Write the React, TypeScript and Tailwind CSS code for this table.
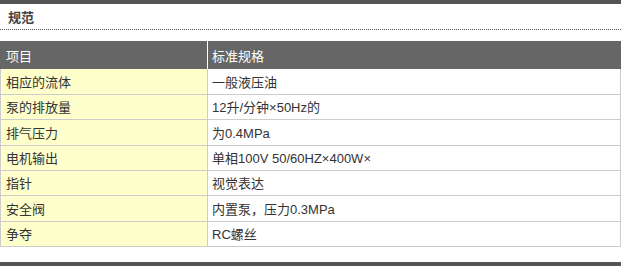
import React from "react";

const rows: { k: string; v: string; h: string }[] = [
  { k: "相应的流体", v: "一般液压油", h: "h-[26px]" },
  { k: "泵的排放量", v: "12升/分钟×50Hz的", h: "h-[25px]" },
  { k: "排气压力", v: "为0.4MPa", h: "h-[26px]" },
  { k: "电机输出", v: "单相100V 50/60HZ×400W×", h: "h-[25px]" },
  { k: "指针", v: "视觉表达", h: "h-[25px]" },
  { k: "安全阀", v: "内置泵，压力0.3MPa", h: "h-[26px]" },
  { k: "争夺", v: "RC螺丝", h: "h-[25px]" },
];

export default function App() {
  return (
    <div
      className="w-[621px] h-[266px] bg-white flex flex-col text-[13px] text-[#333]"
      style={{ fontFamily: '"Liberation Sans", "Noto Sans CJK SC", sans-serif' }}
    >
      <div className="h-[4px] bg-[#555555] shrink-0" />
      <div className="h-[25px] shrink-0 pl-[8px] pt-[5px] font-bold text-[13px] leading-[17px] text-[#444]">
        规范
      </div>
      <div className="h-[1px] shrink-0 border-b border-dotted border-[#555]" />
      <div className="h-[11px] shrink-0" />
      <div className="grid grid-cols-[208px_1fr] h-[28px] shrink-0 bg-[#666666] text-white">
        <div className="border-r border-white flex items-center pl-[6px] pt-[3px]">项目</div>
        <div className="flex items-center pl-[4px] pt-[3px]">标准规格</div>
      </div>
      <div className="border-l border-r border-[#cccccc] shrink-0">
        {rows.map((r) => (
          <div
            key={r.k}
            className={`grid grid-cols-[207px_1fr] border-b border-[#cccccc] ${r.h}`}
          >
            <div className="bg-[#ffffcc] border-r border-[#cccccc] flex items-center pl-[5px] pt-[2px]">
              {r.k}
            </div>
            <div className="flex items-center pl-[4px] pt-[2px]">{r.v}</div>
          </div>
        ))}
      </div>
      <div className="flex-1" />
      <div className="h-[4px] bg-[#555555] shrink-0" />
    </div>
  );
}
